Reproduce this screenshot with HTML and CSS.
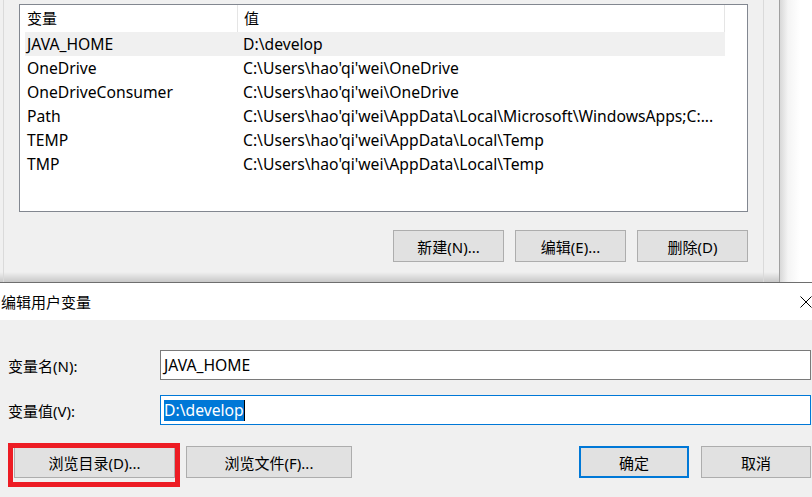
FILE: index.html
```html
<!DOCTYPE html>
<html lang="zh-CN">
<head>
  <meta charset="UTF-8">
  <meta name="viewport" content="width=device-width, initial-scale=1.0">
  <title>编辑用户变量</title>
  <link rel="stylesheet" href="styles.css">
</head>
<body>
  <div class="back">
    <div class="back-window">
      <div class="group">
        <div class="listbox">
          <div class="list-head">
            <div class="cell col-name">变量</div>
            <div class="cell col-value">值</div>
          </div>
          <div class="list-row selected">
            <div class="cell col-name">JAVA_HOME</div>
            <div class="cell col-value">D:\develop</div>
          </div>
          <div class="list-row">
            <div class="cell col-name">OneDrive</div>
            <div class="cell col-value">C:\Users\hao'qi'wei\OneDrive</div>
          </div>
          <div class="list-row">
            <div class="cell col-name">OneDriveConsumer</div>
            <div class="cell col-value">C:\Users\hao'qi'wei\OneDrive</div>
          </div>
          <div class="list-row">
            <div class="cell col-name">Path</div>
            <div class="cell col-value">C:\Users\hao'qi'wei\AppData\Local\Microsoft\WindowsApps;C:...</div>
          </div>
          <div class="list-row">
            <div class="cell col-name">TEMP</div>
            <div class="cell col-value">C:\Users\hao'qi'wei\AppData\Local\Temp</div>
          </div>
          <div class="list-row">
            <div class="cell col-name">TMP</div>
            <div class="cell col-value">C:\Users\hao'qi'wei\AppData\Local\Temp</div>
          </div>
        </div>
        <div class="list-actions">
          <button class="win-btn">新建(N)...</button>
          <button class="win-btn">编辑(E)...</button>
          <button class="win-btn">删除(D)</button>
        </div>
      </div>
    </div>
    <div class="back-shadow"></div>
  </div>

  <div class="dialog">
    <div class="title-bar">
      <span class="title">编辑用户变量</span>
      <svg class="close-icon" width="12" height="12" viewBox="0 0 12 12">
        <path d="M0.5 0.5 L11.5 11.5 M11.5 0.5 L0.5 11.5" stroke="#000" stroke-width="1" fill="none"/>
      </svg>
    </div>
    <div class="dialog-body">
      <div class="field">
        <label class="field-label">变量名(N):</label>
        <div class="textbox">JAVA_HOME</div>
      </div>
      <div class="field">
        <label class="field-label">变量值(V):</label>
        <div class="textbox focused"><span class="selection">D:\develop</span><span class="caret"></span></div>
      </div>
      <div class="dialog-actions">
        <div class="marked">
          <button class="win-btn btn-browse-dir">浏览目录(D)...</button>
          <span class="red-box"></span>
        </div>
        <button class="win-btn btn-browse-file">浏览文件(F)...</button>
        <span class="spacer"></span>
        <button class="win-btn btn-default">确定</button>
        <button class="win-btn">取消</button>
      </div>
    </div>
  </div>
</body>
</html>
```

FILE: styles.css
```css
body {
  margin: 0;
  padding: 0;
  width: 812px;
  height: 497px;
  overflow: hidden;
  background: #f0f0f0;
  font-family: "Noto Sans", "Noto Sans CJK SC", sans-serif;
  font-size: 15px;
  color: #000;
}

/* window behind the dialog */
.back {
  display: flex;
  height: 282px;
}

.back-window {
  width: 779px;
  height: 282px;
  background: linear-gradient(to bottom, #f0f0f0 0, #f0f0f0 272px, #c8c8c8 282px);
  border-right: 1px solid #a0a0a0;
}

.back-shadow {
  flex: 1;
  background: linear-gradient(to right, #d8d8d8 0, #f4f4f4 8px, #ffffff 20px);
}

.group {
  margin-left: 3px;
  width: 759px;
  height: 278px;
  padding-top: 4px;
  border-left: 1px solid #dadada;
  border-right: 1px solid #dadada;
}

.listbox {
  margin-left: 15px;
  width: 722px;
  height: 206px;
  background: #fff;
  border: 1px solid #828790;
  padding-left: 5px;
}

.list-head {
  display: flex;
  height: 27px;
  align-items: center;
}

.list-head .cell {
  height: 27px;
  line-height: 27px;
  font-size: 15px;
  border-right: 1px solid #e5e5e5;
}

.list-row {
  display: flex;
  height: 24px;
  align-items: center;
  width: 700px;
}

.list-row.selected {
  background: #f0f0f0;
}

.cell {
  white-space: nowrap;
  overflow: hidden;
  font-size: 15.7px;
}

.col-name {
  width: 210px;
  padding-left: 2px;
}

.col-value {
  width: 480px;
  padding-left: 6px;
}

.list-actions {
  display: flex;
  justify-content: flex-end;
  gap: 11px;
  margin-top: 18px;
  width: 744px;
}

.win-btn {
  width: 111px;
  height: 32px;
  background: #e1e1e1;
  border: 1px solid #adadad;
  font-family: inherit;
  font-size: 15px;
  color: #000;
  padding: 0;
}

/* dialog */
.dialog {
  border-top: 1px solid #6e6e6e;
}

.title-bar {
  display: flex;
  align-items: center;
  justify-content: space-between;
  height: 37px;
  background: #fff;
}

.title {
  padding-left: 1px;
}

.dialog-body {
  padding: 30px 1px 0 8px;
}

.field {
  display: flex;
  align-items: center;
  margin-bottom: 15px;
}

.field-label {
  width: 152px;
}

.textbox {
  flex: 1;
  height: 28px;
  background: #fff;
  border: 1px solid #7a7a7a;
  padding-left: 3px;
  display: flex;
  align-items: center;
  font-size: 15.7px;
}

.textbox.focused {
  border-color: #0078d7;
}

.selection {
  background: #0078d7;
  color: #fff;
  height: 21px;
  line-height: 21px;
}

.caret {
  width: 1px;
  height: 21px;
  background: #000;
}

.dialog-actions {
  display: flex;
  gap: 11px;
  margin-top: 21px;
  padding-left: 6px;
}

.spacer {
  flex: 1;
}

.marked {
  position: relative;
}

.btn-browse-dir {
  width: 161px;
}

.btn-browse-file {
  width: 166px;
}

.btn-default {
  width: 110px;
  border: 2px solid #0078d7;
  margin-right: 1px;
}

.dialog-actions .win-btn:last-child {
  width: 110px;
}

.red-box {
  position: absolute;
  left: -6px;
  top: -3px;
  width: 162px;
  height: 34px;
  border: 5px solid #ed1c24;
}
```
